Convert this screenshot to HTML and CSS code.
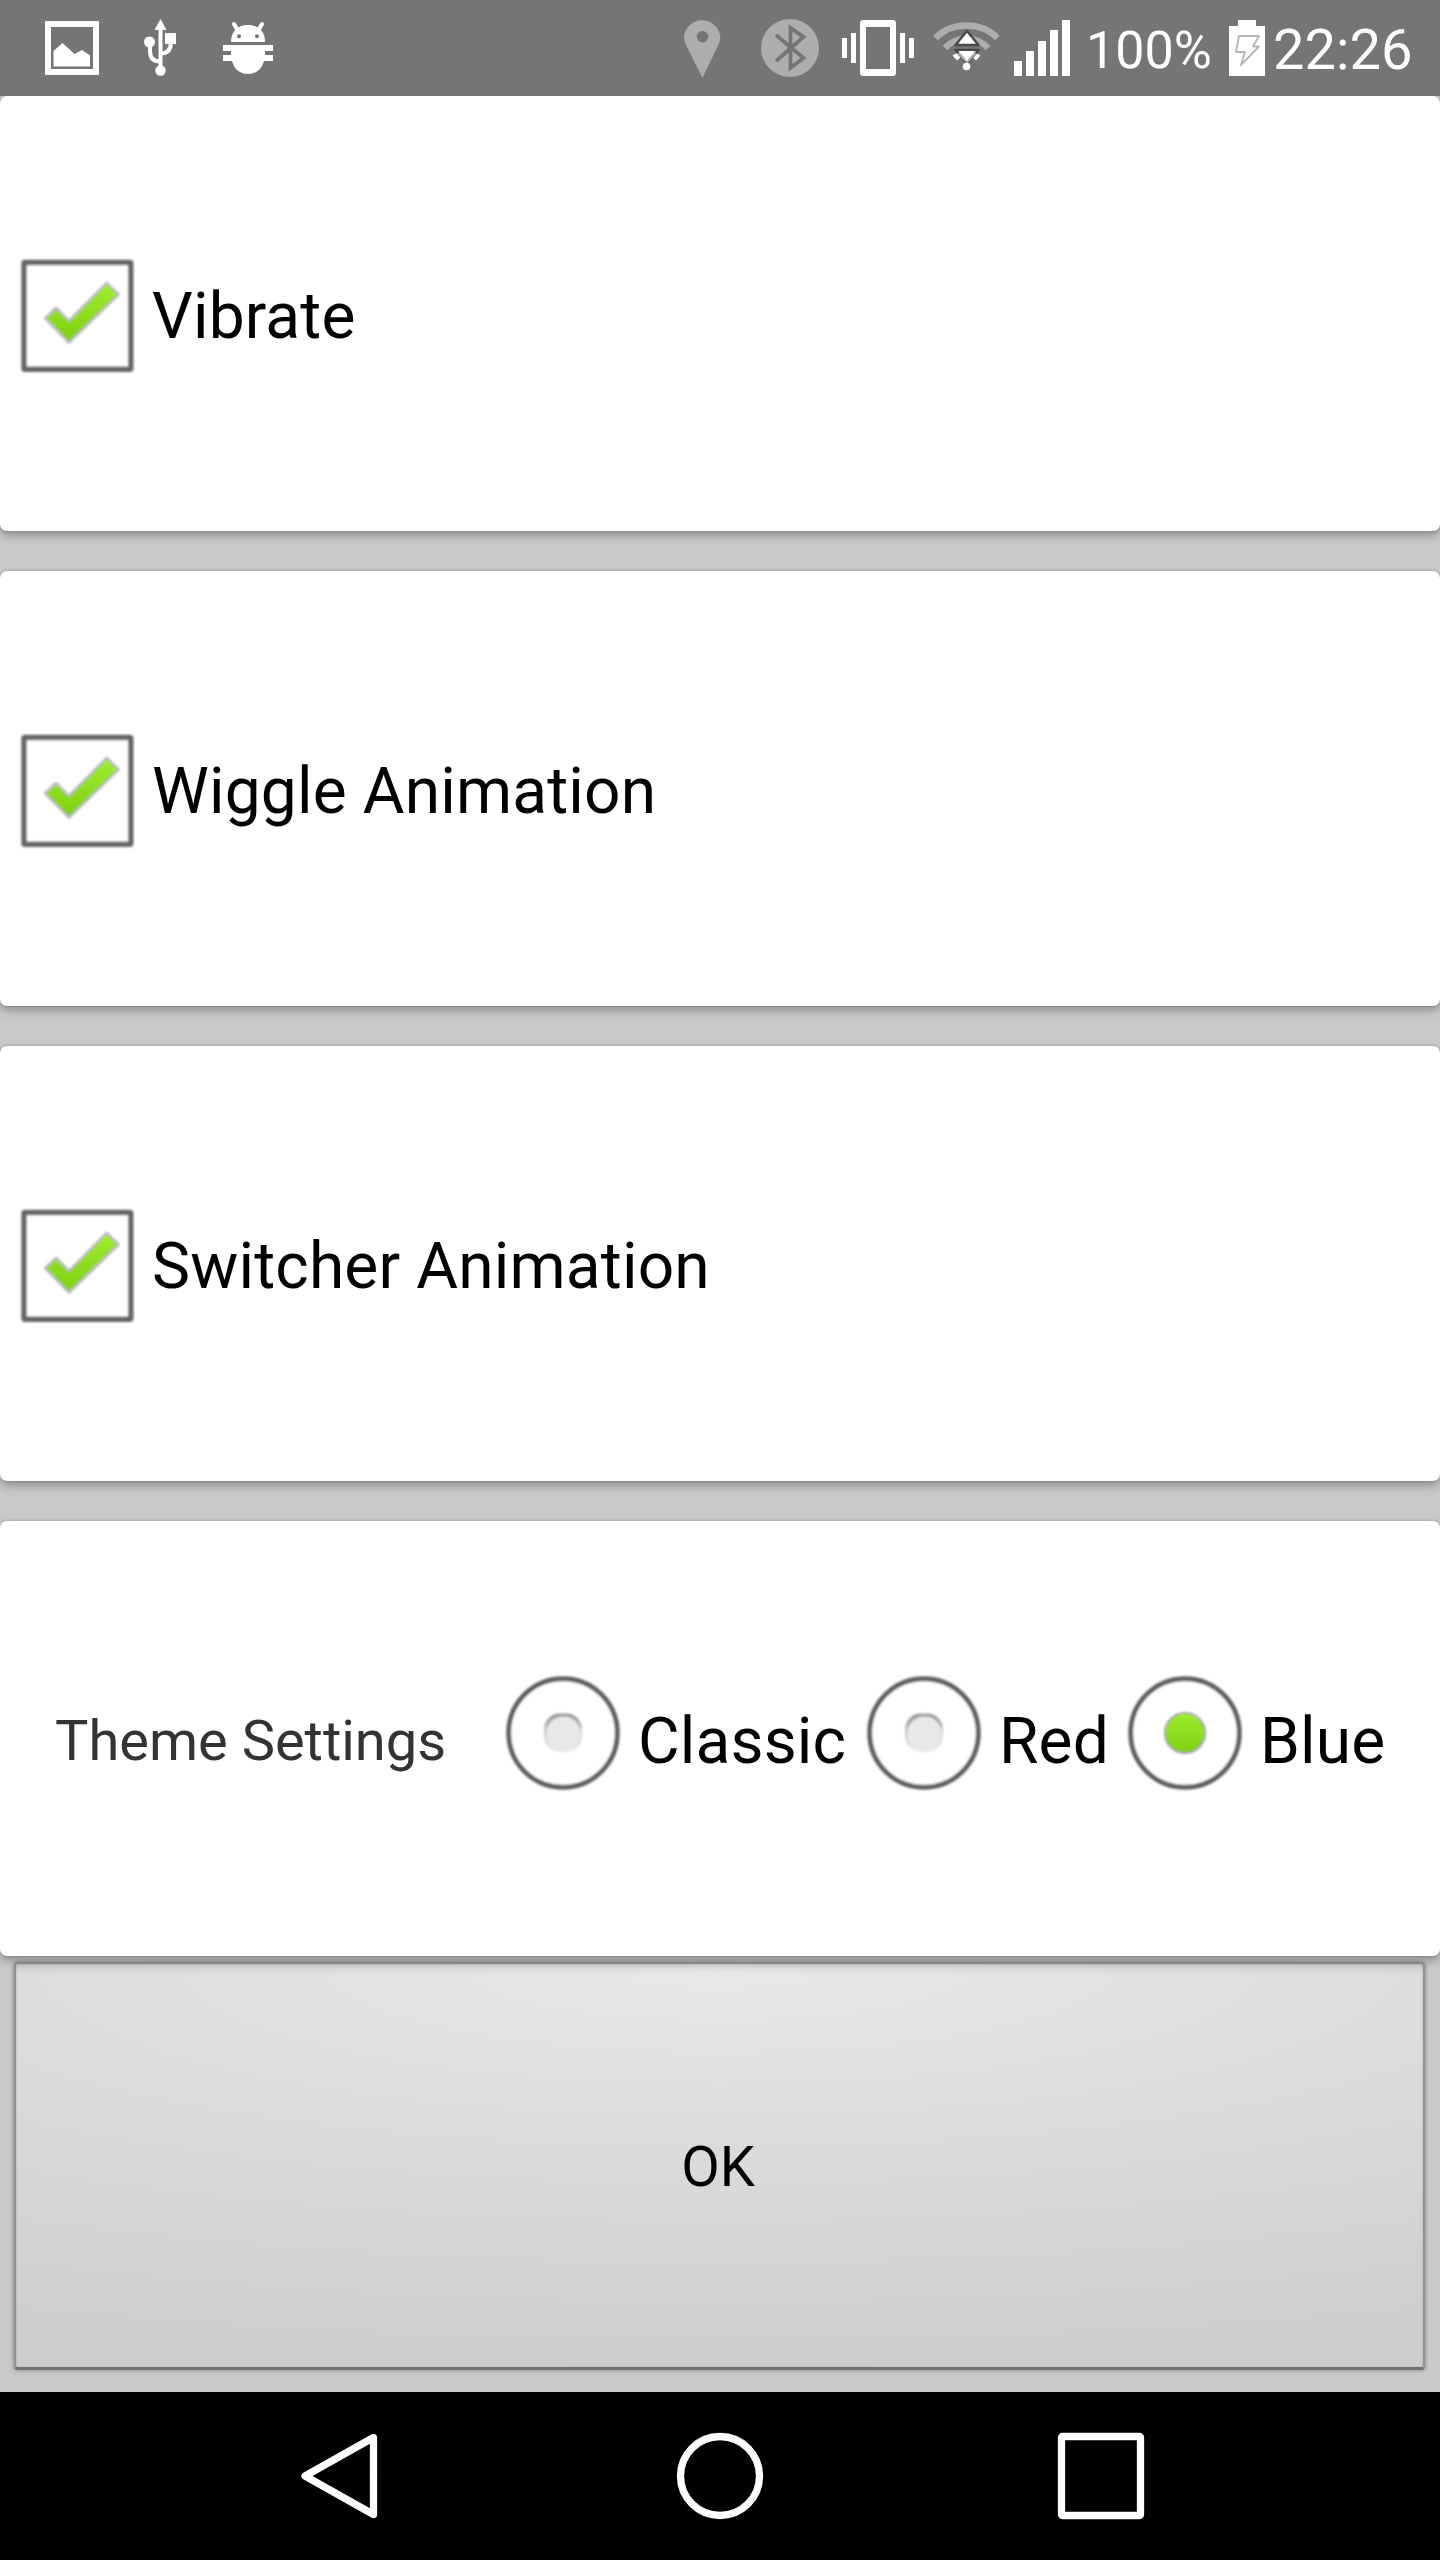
FILE: index.html
```html
<!DOCTYPE html>
<html lang="en">
<head>
<meta charset="utf-8">
<title>Settings</title>
<link rel="stylesheet" href="styles.css">
</head>
<body>
<svg class="defs" width="0" height="0" aria-hidden="true">
  <defs>
    <linearGradient id="green" x1="0" y1="0" x2="0" y2="1"><stop offset="0" stop-color="#a0ec30"/><stop offset="1" stop-color="#7dd010"/></linearGradient>
    <linearGradient id="rim" x1="0" y1="0" x2="0" y2="1"><stop offset="0" stop-color="#9c9c9c"/><stop offset=".5" stop-color="#c4c4c4"/><stop offset="1" stop-color="#ebebeb"/></linearGradient>
    <filter id="soft" x="-10%" y="-10%" width="120%" height="120%"><feGaussianBlur stdDeviation="0.9"/></filter>
    <symbol id="check" viewBox="0 0 116 116">
      <g filter="url(#soft)">
        <rect x="5" y="4.500" width="106.800" height="106.800" rx="1" fill="#fff" stroke="#666" stroke-width="5.400"/>
        <path d="M26.300 60.300 37 50 50 63 87.700 25 99.500 36.500 50 84.500Z" fill="url(#green)" stroke="#bdb8c0" stroke-width="3" stroke-linejoin="round"/>
        <path d="M27.800 60.300 37 51.500 50 64.500 87.700 26.500 98 36.500 50 83Z" fill="url(#green)"/>
      </g>
    </symbol>
    <symbol id="radio-off" viewBox="0 0 120 120">
      <circle cx="60" cy="60" r="54.300" fill="#fff" stroke="#606060" stroke-width="4.900" filter="url(#soft)"/>
      <g filter="url(#soft)"><rect x="41.200" y="40.500" width="37.600" height="38" rx="15" fill="url(#rim)"/><ellipse cx="60.500" cy="61.500" rx="17.500" ry="18" fill="#e8e8e8"/></g>
    </symbol>
    <symbol id="radio-on" viewBox="0 0 120 120">
      <g filter="url(#soft)">
        <circle cx="60" cy="60" r="54.300" fill="#fff" stroke="#606060" stroke-width="4.900"/>
        <circle cx="60" cy="60" r="20.300" fill="url(#green)" stroke="#a8a2ae" stroke-width="2"/>
      </g>
    </symbol>
  </defs>
</svg>
<div class="screen">
  <header class="status">
    <svg class="status-left" width="320" height="96" viewBox="0 0 320 96">
      <path d="M48 24H96V72H48Z" fill="none" stroke="#fff" stroke-width="6"/>
      <path d="M53.500 66.500V51L62.500 43 74.500 54 82 50 90 55.500V66.500Z" fill="#fff"/>
      <g fill="#fff">
        <path d="M160.500 19 166.500 30H154.500Z"/><path d="M158.500 28h4v42h-4z"/>
        <circle cx="160.500" cy="70.500" r="5.200"/><circle cx="149.500" cy="42" r="5.500"/><path d="M165 33h11v11h-11z"/>
      </g>
      <path d="M150 44V51Q150 61.500 160 61.500M171 42Q171 53.500 160.500 53.500" fill="none" stroke="#fff" stroke-width="4"/>
      <path d="M231 42C231 31 238 25 248 25S265 31 265 42Z" fill="#fff"/>
      <path d="M234 24 238 31M262 24 258 31" stroke="#fff" stroke-width="4" stroke-linecap="round"/>
      <circle cx="239" cy="36.200" r="2" fill="#757575"/><circle cx="257" cy="36.200" r="2" fill="#757575"/>
      <path d="M223 45H273V51H265V55H273V61H264C262 69 256 74 248 74S234 69 232 61H223V55H231V51H223Z" fill="#fff"/>
    </svg>
    <svg class="status-right" width="402" height="96" viewBox="670 0 402 96">
      <path fill-rule="evenodd" fill="#adadad" d="M702.500 78 687 47C685 43 684 40 684 37a18.200 18 0 0 1 36.300 0c0 3-1 6-3 10ZM702.500 31a5.700 5.700 0 1 0 .01 0Z"/>
      <circle cx="790" cy="48" r="29" fill="#adadad"/>
      <path d="M776 35 803.500 58 790.500 68V28L803.500 37 776 61" fill="none" stroke="#757575" stroke-width="3.800"/>
      <rect x="863" y="23.500" width="30" height="49" rx="1" fill="none" stroke="#fff" stroke-width="6"/>
      <path d="M862 20h32l2 2v5h-36v-5zM860 69h36v5l-2 2h-32l-2-2zM842 38h5v20h-5zM851 33h5v30h-5zM900 33h5v30h-5zM909 38h5v20h-5z" fill="#fff"/>
      <path d="M935.500 38Q948 25.500 966.500 25.500T997.500 38M945 48Q954 38.500 966.500 38.500T988 48" fill="none" stroke="#adadad" stroke-width="6.500"/>
      <path d="M954 57 959 52 979 52 974 64 966.500 62 959 60Z" fill="#757575"/>
      <path d="M952.500 55.500 957 53 961 57 957 60.500ZM980.500 55.500 976 53 972 57 976 60.500Z" fill="#fff"/>
      <path d="M967 31 978.500 45H955.500ZM967 63.500 955.500 50H978.500Z" fill="#fff" stroke="#484848" stroke-width="2.400" stroke-linejoin="round"/>
      <path d="M958.500 53 967 62 975.500 53" fill="none" stroke="#adadad" stroke-width="2.400"/>
      <path d="M960 51H974L967 61Z" fill="#fff"/>
      <circle cx="966.500" cy="66.500" r="3.800" fill="#fff"/>
      <path d="M1014 61h8v15h-8zM1026 51h8v25h-8zM1038 41h8v35h-8zM1050 30h8v46h-8zM1062 20h8v56h-8z" fill="#fff"/>
    </svg>
    <span class="percent">100%</span>
    <svg class="battery" width="36" height="56" viewBox="0 0 36 56">
      <path d="M9 0h18v6h9v50H0V6h9Z" fill="#fff"/>
      <path d="M10 16H30L24 26.500H30L12 45 16 32H7Z" fill="none" stroke="#b5b5b5" stroke-width="1.800" stroke-linejoin="round"/>
    </svg>
    <span class="clock">22:26</span>
  </header>
  <main class="content">
    <section class="card"><label class="option"><svg class="box"><use href="#check"/></svg><span>Vibrate</span></label></section>
    <section class="card"><label class="option"><svg class="box"><use href="#check"/></svg><span>Wiggle Animation</span></label></section>
    <section class="card"><label class="option"><svg class="box"><use href="#check"/></svg><span>Switcher Animation</span></label></section>
    <section class="card theme">
      <h2 class="theme-title">Theme Settings</h2>
      <label class="choice classic"><svg class="radio"><use href="#radio-off"/></svg><span>Classic</span></label>
      <label class="choice red"><svg class="radio"><use href="#radio-off"/></svg><span>Red</span></label>
      <label class="choice"><svg class="radio"><use href="#radio-on"/></svg><span>Blue</span></label>
    </section>
    <button class="ok">OK</button>
  </main>
  <nav class="navbar">
    <svg width="88" height="88" viewBox="0 0 88 88"><path d="M73.500 5.500V82.500L5 44Z"/></svg>
    <svg class="home" width="88" height="88" viewBox="0 0 88 88"><circle cx="44" cy="44" r="39.500"/></svg>
    <svg width="88" height="88" viewBox="0 0 88 88"><rect x="4.500" y="4.500" width="79" height="79" rx="1"/></svg>
  </nav>
</div>
</body>
</html>
```
FILE: styles.css
```css
* { box-sizing: border-box; }
body { margin: 0; font-family: Roboto, "Liberation Sans", sans-serif; background: #c9c9c9; }
svg { display: block; flex: none; }
.defs { position: absolute; }
.screen { width: 1440px; height: 2560px; display: flex; flex-direction: column; overflow: hidden; }

.status { height: 96px; flex: none; display: flex; background: #757575; color: #fff; white-space: nowrap; }
.status-right { margin-left: 350px; }
.percent { width: 143px; margin-left: 14px; font-size: 52px; line-height: 61px; padding-top: 20px; }
.battery { margin-top: 20px; }
.clock { margin-left: 8px; padding-top: 17px; font-size: 56px; line-height: 66px; }

.content { flex: 1; display: flex; flex-direction: column; gap: 40px; overflow: hidden; }
.card {
  height: 435px; flex: none; display: flex; align-items: center;
  background: #fff; border-radius: 7px; color: #000;
  box-shadow: 0 5px 8px rgba(0, 0, 0, .26), 0 0 3px rgba(0, 0, 0, .25);
}
.option { display: flex; align-items: center; padding: 5px 0 0 19px; font-size: 64px; line-height: 75px; letter-spacing: .17px; }
.option span { margin-left: 17px; padding-top: 1px; }
.box { width: 116px; height: 116px; }

.theme { padding-left: 55px; position: relative; z-index: 1; }
.theme-title { width: 448px; margin: 4px 0 0; font-size: 56px; line-height: 66px; font-weight: 400; color: #333; }
.choice { display: flex; align-items: center; font-size: 64px; line-height: 75px; letter-spacing: .15px; }
.classic { width: 361px; }
.red { width: 261px; }
.radio { width: 120px; height: 120px; margin-top: -12px; }
.choice span { margin-left: 15px; padding-top: 5px; }

.ok {
  width: 1411px; height: 408px; flex: none; margin: -34px 0 0 14px; padding: 3px 3px 0 0;
  border: 2px solid #929292; border-bottom: 3px solid #727272; border-radius: 4px;
  background: radial-gradient(ellipse 1800px 400px at 50% 0, #e9e9e9 0%, #dadada 50%, rgba(206, 206, 206, 0) 100%), #cecece;
  box-shadow: 0 0 4px rgba(0, 0, 0, .4), inset 0 0 2px rgba(0, 0, 0, .2), inset 0 8px 8px -4px rgba(0, 0, 0, .1);
  font: 56px/66px Roboto, "Liberation Sans", sans-serif; color: #000;
}

.navbar { height: 168px; flex: none; display: flex; align-items: center; justify-content: space-between; padding: 0 295px 0 300px; background: #000; }
.navbar svg { fill: none; stroke: #fff; stroke-width: 7.300px; stroke-linejoin: round; }
.navbar .home { margin-right: 5px; }
```
